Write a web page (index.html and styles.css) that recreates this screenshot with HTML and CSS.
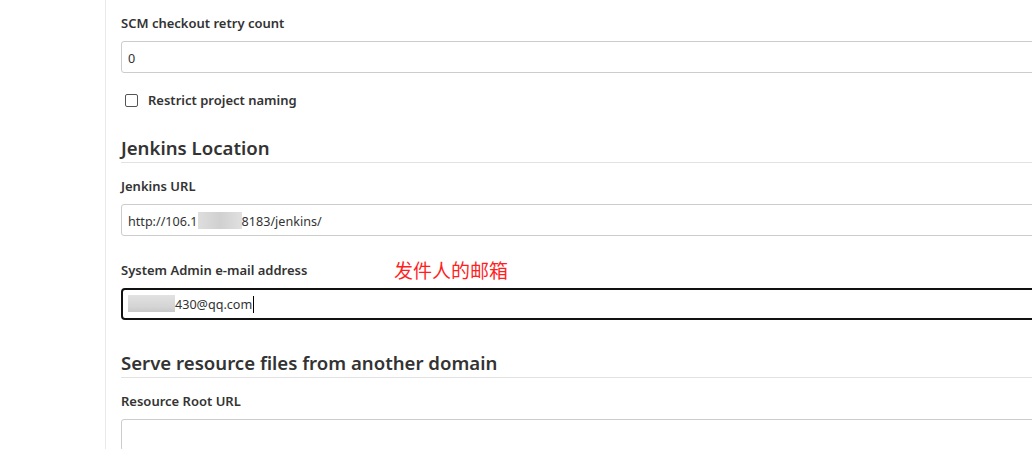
FILE: index.html
```html
<!DOCTYPE html>
<html lang="en">
<head>
  <meta charset="UTF-8">
  <meta name="viewport" content="width=device-width, initial-scale=1.0">
  <title>Configure System - Jenkins</title>
  <link rel="stylesheet" href="styles.css">
</head>
<body>
  <div class="page">
    <aside class="side-panel"></aside>

    <main class="main-panel">
      <div class="section">
        <div class="field tight">
          <div class="label">SCM checkout retry count</div>
          <div class="input">0</div>
        </div>
        <div class="checkbox-row">
          <span class="checkbox"></span>
          <span class="checkbox-label">Restrict project naming</span>
        </div>
      </div>

      <div class="section">
        <h2 class="section-title">Jenkins Location</h2>
        <div class="field">
          <div class="label">Jenkins URL</div>
          <div class="input">http://106.1<span class="masked url-mask"></span>8183/jenkins/</div>
        </div>
        <div class="field">
          <div class="label">System Admin e-mail address <span class="note">发件人的邮箱</span></div>
          <div class="input focused"><span class="masked mail-mask"></span>430@qq.com<span class="caret"></span></div>
        </div>
      </div>

      <div class="section">
        <h2 class="section-title">Serve resource files from another domain</h2>
        <div class="field">
          <div class="label">Resource Root URL</div>
          <div class="input"></div>
        </div>
      </div>
    </main>
  </div>
</body>
</html>
```

FILE: styles.css
```css
body {
  margin: 0;
  padding: 0;
  background: #fff;
  color: #333;
  font-family: 'Noto Sans', 'Open Sans', sans-serif;
  font-size: 13px;
  overflow: hidden;
}
.page {
  display: flex;
  min-height: 449px;
}
.side-panel {
  width: 105px;
  flex-shrink: 0;
  border-right: 1px solid #e9e9e9;
}
.main-panel {
  flex: 1;
  padding: 14px 0 0 15px;
  min-width: 1000px;
}
.section {
  margin-bottom: 29px;
}
.section:first-child {
  margin-bottom: 25px;
}
.section-title {
  margin: 0 0 14px;
  font-size: 18.6px;
  font-weight: 600;
  line-height: 28px;
  color: #333;
  border-bottom: 1px solid #e2e2e2;
}
.field {
  margin-bottom: 25px;
}
.field.tight {
  margin-bottom: 18px;
}
.section .field:last-child {
  margin-bottom: 0;
}
.label {
  height: 18px;
  line-height: 18px;
  margin-bottom: 9px;
  font-weight: 600;
  position: relative;
}
.note {
  position: absolute;
  left: 273px;
  top: -3px;
  color: #ff1f1f;
  font-family: 'Noto Sans CJK SC', sans-serif;
  font-size: 19px;
  font-weight: 400;
  line-height: 24px;
}
.input {
  box-sizing: border-box;
  height: 32px;
  padding: 2px 6px 0;
  line-height: 30px;
  font-size: 12.6px;
  border: 1px solid #ccc;
  border-radius: 3px;
  white-space: nowrap;
  overflow: hidden;
}
.input.focused {
  border: 2px solid #111;
  border-radius: 4px;
  padding: 2px 5px 0;
  line-height: 26px;
}
.masked {
  display: inline-block;
  height: 17px;
  vertical-align: -3px;
  background: linear-gradient(90deg, #dedede, #d0d0d0 50%, #e0e0e0);
}
.url-mask {
  width: 44px;
}
.mail-mask {
  width: 47px;
  background: linear-gradient(180deg, #e2e2e2, #d4d4d4 70%, #c8c8c8);
}
.caret {
  display: inline-block;
  width: 1px;
  height: 17px;
  margin-left: 1px;
  vertical-align: -4px;
  background: #000;
}
.checkbox-row {
  display: flex;
  align-items: center;
  height: 18px;
  padding-left: 4px;
}
.checkbox {
  box-sizing: border-box;
  width: 13px;
  height: 13px;
  border: 1px solid #555;
  border-radius: 2px;
  margin-right: 10px;
}
.checkbox-label {
  font-weight: 600;
}
```
